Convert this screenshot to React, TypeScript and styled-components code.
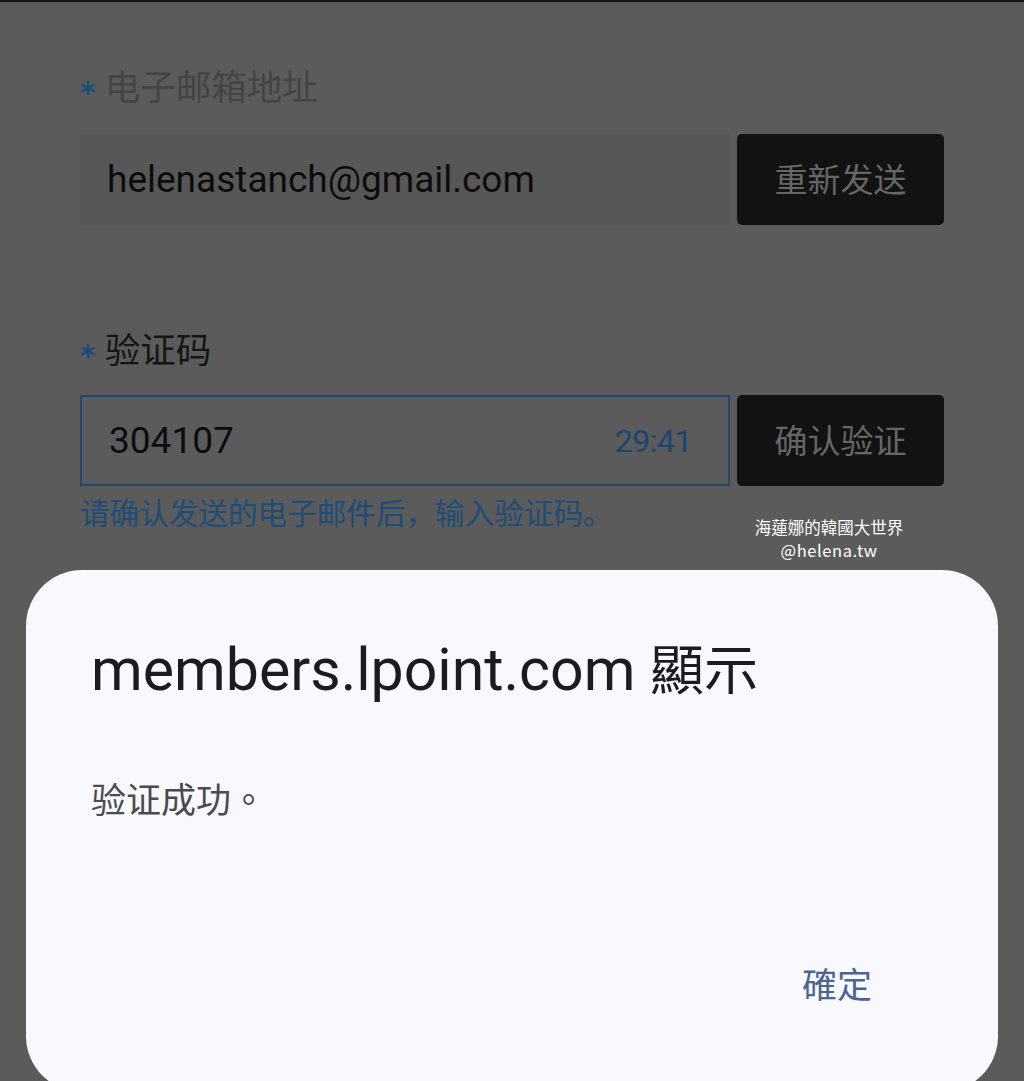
import React from "react";
import styled, { createGlobalStyle } from "styled-components";

const Global = createGlobalStyle`
  html, body {
    margin: 0;
    padding: 0;
    background: #5b5b5b;
    height: 1081px;
    overflow: hidden;
  }
  #root { height: 1081px; }
`;

const Screen = styled.div`
  position: relative;
  height: 1081px;
  border-top: 2px solid #141414;
  box-sizing: border-box;
  font-family: Roboto, "Noto Sans CJK SC", sans-serif;
  overflow: hidden;
`;

const Form = styled.div`
  display: flex;
  flex-direction: column;
  padding: 60px 80px 0 80px;
  width: 864px;
`;

const Label = styled.div<{ $dark?: boolean; $mt?: number }>`
  display: flex;
  align-items: center;
  gap: 9px;
  height: 44px;
  margin-top: ${(p) => p.$mt ?? 0}px;
  font-family: "Noto Sans CJK SC", sans-serif;
  font-size: 35.5px;
  color: ${(p) => (p.$dark ? "#151515" : "#444444")};
`;

const Star = styled.span`
  font-family: "DejaVu Sans", sans-serif;
  font-size: 30px;
  font-weight: bold;
  color: #1b4c78;
  transform: translateY(8px);
`;

const Row = styled.div<{ $mt: number }>`
  display: grid;
  grid-template-columns: 650px 207px;
  gap: 7px;
  margin-top: ${(p) => p.$mt}px;
  height: 91px;
`;

const Field = styled.div<{ $focused?: boolean }>`
  display: flex;
  align-items: center;
  justify-content: space-between;
  box-sizing: border-box;
  padding: 0 36px 0 27px;
  background: ${(p) => (p.$focused ? "transparent" : "#575757")};
  border: ${(p) => (p.$focused ? "2px solid #1c4a72" : "none")};
  font-family: Roboto, sans-serif;
  font-size: 37px;
  color: #0c0c0c;
`;

const Timer = styled.span`
  font-family: Roboto, sans-serif;
  font-size: 32px;
  letter-spacing: -0.5px;
  color: #1a4670;
`;

const DarkButton = styled.div`
  display: flex;
  align-items: center;
  justify-content: center;
  padding-bottom: 3px;
  background: #121212;
  border-radius: 5px;
  font-family: "Noto Sans CJK SC", sans-serif;
  font-size: 33px;
  color: #666666;
`;

const Help = styled.div`
  margin-top: 8px;
  font-family: "Noto Sans CJK SC", sans-serif;
  font-size: 29.6px;
  line-height: 36px;
  color: #1d4d78;
`;

const Watermark = styled.div`
  position: absolute;
  left: 740px;
  top: 515px;
  width: 178px;
  display: flex;
  flex-direction: column;
  align-items: center;
  gap: 2px;
  color: #ffffff;
  font-family: "Noto Sans CJK TC", sans-serif;
  font-size: 16.5px;
  line-height: 21px;
`;

const Handle = styled.span`
  letter-spacing: 0.6px;
`;

const Dialog = styled.div`
  position: absolute;
  left: 26px;
  top: 568px;
  width: 972px;
  height: 522px;
  box-sizing: border-box;
  border-radius: 56px;
  background: #f8f8fd;
  display: flex;
  flex-direction: column;
  padding: 62px 126px 0 65px;
`;

const Title = styled.div`
  font-family: Roboto, sans-serif;
  font-size: 59px;
  line-height: 70px;
  color: #1c1b1f;
  white-space: nowrap;
`;

const TitleCjk = styled.span`
  font-family: "Noto Sans CJK TC", sans-serif;
  font-size: 54px;
`;

const Message = styled.div`
  margin-top: 71px;
  font-family: "Noto Sans CJK TC", sans-serif;
  font-size: 35px;
  line-height: 44px;
  color: #4a4a4f;
`;

const Actions = styled.div`
  display: flex;
  justify-content: flex-end;
  margin-top: 141px;
`;

const TextButton = styled.div`
  font-family: "Noto Sans CJK TC", sans-serif;
  font-size: 35px;
  line-height: 44px;
  color: #4a6591;
`;

export default function App() {
  return (
    <>
      <Global />
      <Screen>
        <Form>
          <Label>
            <Star>*</Star>
            电子邮箱地址
          </Label>
          <Row $mt={28}>
            <Field>helenastanch@gmail.com</Field>
            <DarkButton>重新发送</DarkButton>
          </Row>
          <Label $dark $mt={100}>
            <Star>*</Star>
            验证码
          </Label>
          <Row $mt={26}>
            <Field $focused>
              <span>304107</span>
              <Timer>29:41</Timer>
            </Field>
            <DarkButton>确认验证</DarkButton>
          </Row>
          <Help>请确认发送的电子邮件后，输入验证码。</Help>
        </Form>
        <Watermark>
          <span>海蓮娜的韓國大世界</span>
          <Handle>@helena.tw</Handle>
        </Watermark>
        <Dialog>
          <Title>
            members.lpoint.com <TitleCjk>顯示</TitleCjk>
          </Title>
          <Message>验证成功。</Message>
          <Actions>
            <TextButton>確定</TextButton>
          </Actions>
        </Dialog>
      </Screen>
    </>
  );
}
